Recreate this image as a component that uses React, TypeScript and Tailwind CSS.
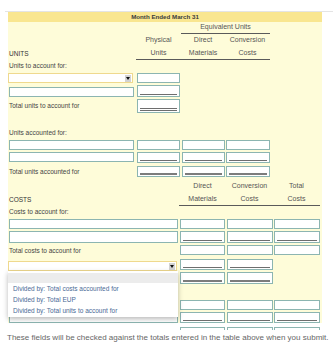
import clsx from "clsx";

type Line = "none" | "single" | "double" | "thick";

// input cell with accounting underline
function Box({ line = "none", className }: { line?: Line; className?: string }) {
  return (
    <div
      className={clsx(
        "flex flex-col justify-end border border-[#8cb5b1] bg-white px-[2px] pb-[1px]",
        className
      )}
    >
      {line === "single" && <div className="h-px bg-[#6e6e6e]" />}
      {line === "double" && <div className="h-[3px] border-y border-[#6e6e6e]" />}
      {line === "thick" && <div className="h-[2px] bg-[#7c7c7c]" />}
    </div>
  );
}

function Arrow() {
  return (
    <div className="flex h-[7px] w-[6px] items-center justify-center bg-[#d2d2d2]">
      <svg width="4" height="3" viewBox="0 0 4 3">
        <path d="M0 0h4L2 3z" fill="#111" />
      </svg>
    </div>
  );
}

function Select({ className }: { className?: string }) {
  return (
    <div
      className={clsx(
        "flex items-center justify-end border border-[#efd98e] bg-white pr-[1px]",
        className
      )}
    >
      <Arrow />
    </div>
  );
}

function TextIn({ className }: { className?: string }) {
  return <div className={clsx("border border-[#8cb5b1] bg-white", className)} />;
}

const unitsCols = "grid grid-cols-[128px_45px_44px_45px]";
const costCols = "grid grid-cols-[171px_47px_47px_47px]";

export default function App() {
  return (
    <div className="relative h-[343px] w-[333px] overflow-hidden bg-white font-['Liberation_Sans',Arial,sans-serif] text-[6.5px] text-[#444]">
      <div className="h-[11px]" />
      <div className="ml-[5px] h-px bg-[#e4e4e4]" />

      <div className="ml-[8px] w-[314px]">
        <div className="flex h-[10px] items-center justify-center bg-[#f9e690] text-[6.2px] font-bold text-[#3a3a3a]">
          Month Ended March 31
        </div>

        <div className="bg-[#fefcd9]">
          {/* UNITS header */}
          <div className={clsx(unitsCols, "h-[12px] text-[7px] text-[#555]")}>
            <div />
            <div />
            <div className="col-span-2 flex items-center justify-center border-b border-[#5a5a5a]">
              Equivalent Units
            </div>
          </div>
          <div className={clsx(unitsCols, "h-[13px] items-center text-center text-[7px] text-[#555]")}>
            <div />
            <div>Physical</div>
            <div>Direct</div>
            <div>Conversion</div>
          </div>
          <div className={clsx(unitsCols, "h-[13px] text-[7px] text-[#555]")}>
            <div className="flex items-center pl-[1px] text-[6.5px] text-[#333]">UNITS</div>
            <div className="flex items-center justify-center border-b border-[#5a5a5a]">Units</div>
            <div className="flex items-center justify-center border-b border-[#5a5a5a]">Materials</div>
            <div className="flex items-center justify-center border-b border-[#5a5a5a]">Costs</div>
          </div>

          <div className="flex h-[12px] items-center pl-[1px]">Units to account for:</div>
          <div className={clsx(unitsCols, "h-[13px] pt-[1px]")}>
            <Select className="h-[10px] w-[125px]" />
            <Box className="ml-[1px] h-[10px] w-[43px]" />
          </div>
          <div className={clsx(unitsCols, "h-[13px]")}>
            <TextIn className="ml-[1px] mt-[2px] h-[10px] w-[125px]" />
            <Box line="single" className="ml-[1px] h-[12px] w-[43px]" />
          </div>
          <div className={clsx(unitsCols, "h-[15px]")}>
            <div className="flex items-end pb-[2px] pl-[1px]">Total units to account for</div>
            <Box line="double" className="ml-[1px] mt-[1px] h-[14px] w-[43px]" />
          </div>

          <div className="h-[14px]" />
          <div className="flex h-[12px] items-center pl-[1px]">Units accounted for:</div>
          <div className={clsx(unitsCols, "h-[12px] pt-[1px]")}>
            <TextIn className="ml-[1px] h-[10px] w-[125px]" />
            <Box className="ml-[1px] h-[10px] w-[43px]" />
            <Box className="ml-[1px] h-[10px] w-[43px]" />
            <Box className="ml-[1px] h-[10px] w-[44px]" />
          </div>
          <div className={clsx(unitsCols, "h-[12px] pt-[1px]")}>
            <TextIn className="ml-[1px] h-[10px] w-[125px]" />
            <Box line="single" className="ml-[1px] h-[11px] w-[43px]" />
            <Box line="single" className="ml-[1px] h-[11px] w-[43px]" />
            <Box line="single" className="ml-[1px] h-[11px] w-[44px]" />
          </div>
          <div className={clsx(unitsCols, "h-[15px] pt-[3px]")}>
            <div className="flex items-center pl-[1px]">Total units accounted for</div>
            <Box line="thick" className="ml-[1px] h-[11px] w-[43px]" />
            <Box line="thick" className="ml-[1px] h-[11px] w-[43px]" />
            <Box line="thick" className="ml-[1px] h-[11px] w-[44px]" />
          </div>

          {/* COSTS header */}
          <div className="h-[2px]" />
          <div className={clsx(costCols, "h-[13px] items-center text-center text-[7px] text-[#555]")}>
            <div />
            <div>Direct</div>
            <div>Conversion</div>
            <div>Total</div>
          </div>
          <div className={clsx(costCols, "h-[13px] text-[7px] text-[#555]")}>
            <div className="flex items-center pl-[1px] text-[6.5px] text-[#333]">COSTS</div>
            <div className="flex items-center justify-center border-b border-[#5a5a5a]">Materials</div>
            <div className="flex items-center justify-center border-b border-[#5a5a5a]">Costs</div>
            <div className="flex items-center justify-center border-b border-[#5a5a5a]">Costs</div>
          </div>

          <div className="flex h-[12px] items-center pl-[1px]">Costs to account for:</div>
          <div className={clsx(costCols, "h-[12px] pt-[1px]")}>
            <TextIn className="ml-[1px] h-[10px] w-[169px]" />
            <Box className="ml-[1px] h-[10px] w-[45px]" />
            <Box className="ml-[1px] h-[10px] w-[46px]" />
            <Box className="ml-[1px] h-[10px] w-[46px]" />
          </div>
          <div className={clsx(costCols, "h-[13px] pt-[1px]")}>
            <TextIn className="ml-[1px] h-[12px] w-[169px]" />
            <Box line="single" className="ml-[1px] h-[12px] w-[45px]" />
            <Box line="single" className="ml-[1px] h-[12px] w-[46px]" />
            <Box line="single" className="ml-[1px] h-[12px] w-[46px]" />
          </div>
          <div className={clsx(costCols, "h-[14px] pt-[2px]")}>
            <div className="flex items-end pb-[1px] pl-[1px]">Total costs to account for</div>
            <Box className="ml-[1px] h-[10px] w-[45px]" />
            <Box className="ml-[1px] h-[10px] w-[46px]" />
            <Box className="ml-[1px] h-[10px] w-[46px]" />
          </div>
          <div className={clsx(costCols, "h-[14px]")}>
            <Select className="mt-[4px] h-[10px] w-[169px]" />
            <Box line="single" className="ml-[1px] mt-[2px] h-[11px] w-[45px]" />
            <Box line="single" className="ml-[1px] mt-[2px] h-[11px] w-[46px]" />
          </div>
          <div className={clsx(costCols, "h-[13px] pt-[1px]")}>
            <div />
            <Box line="thick" className="ml-[1px] h-[12px] w-[45px]" />
            <Box line="thick" className="ml-[1px] h-[12px] w-[46px]" />
          </div>

          <div className="h-[15px]" />
          <div className={clsx(costCols, "h-[12px] pt-[1px]")}>
            <div />
            <Box className="ml-[1px] h-[10px] w-[45px]" />
            <Box className="ml-[1px] h-[10px] w-[46px]" />
            <Box className="ml-[1px] h-[10px] w-[46px]" />
          </div>
          <div className={clsx(costCols, "h-[12px] pt-[1px]")}>
            <TextIn className="ml-[1px] h-[11px] w-[169px]" />
            <Box line="single" className="ml-[1px] h-[11px] w-[45px]" />
            <Box line="single" className="ml-[1px] h-[11px] w-[46px]" />
            <Box line="single" className="ml-[1px] h-[11px] w-[46px]" />
          </div>
        </div>

        <div className="h-[4px]" />
        <div className={clsx(costCols, "h-[3px] overflow-hidden")}>
          <div />
          <Box className="ml-[1px] h-[10px] w-[45px]" />
          <Box className="ml-[1px] h-[10px] w-[46px]" />
          <Box className="ml-[1px] h-[10px] w-[46px]" />
        </div>
      </div>

      <div className="mt-[3px] whitespace-nowrap pl-[7px] text-[8px] leading-[10px] text-[#666]">
        These fields will be checked against the totals entered in the table above when you submit.
      </div>

      {/* open dropdown menu */}
      <div className="absolute left-[8px] top-[271px] w-[170px] bg-white pb-[1px] pt-[2px] text-[#4a6a96] shadow-[0_2px_5px_rgba(0,0,0,0.28)]">
        <div className="h-[10px] bg-[#ececec]" />
        <div className="flex h-[11px] items-center pl-[5px]">Divided by: Total costs accounted for</div>
        <div className="flex h-[11px] items-center pl-[5px]">Divided by: Total EUP</div>
        <div className="flex h-[11px] items-center pl-[5px]">Divided by: Total units to account for</div>
      </div>
    </div>
  );
}
